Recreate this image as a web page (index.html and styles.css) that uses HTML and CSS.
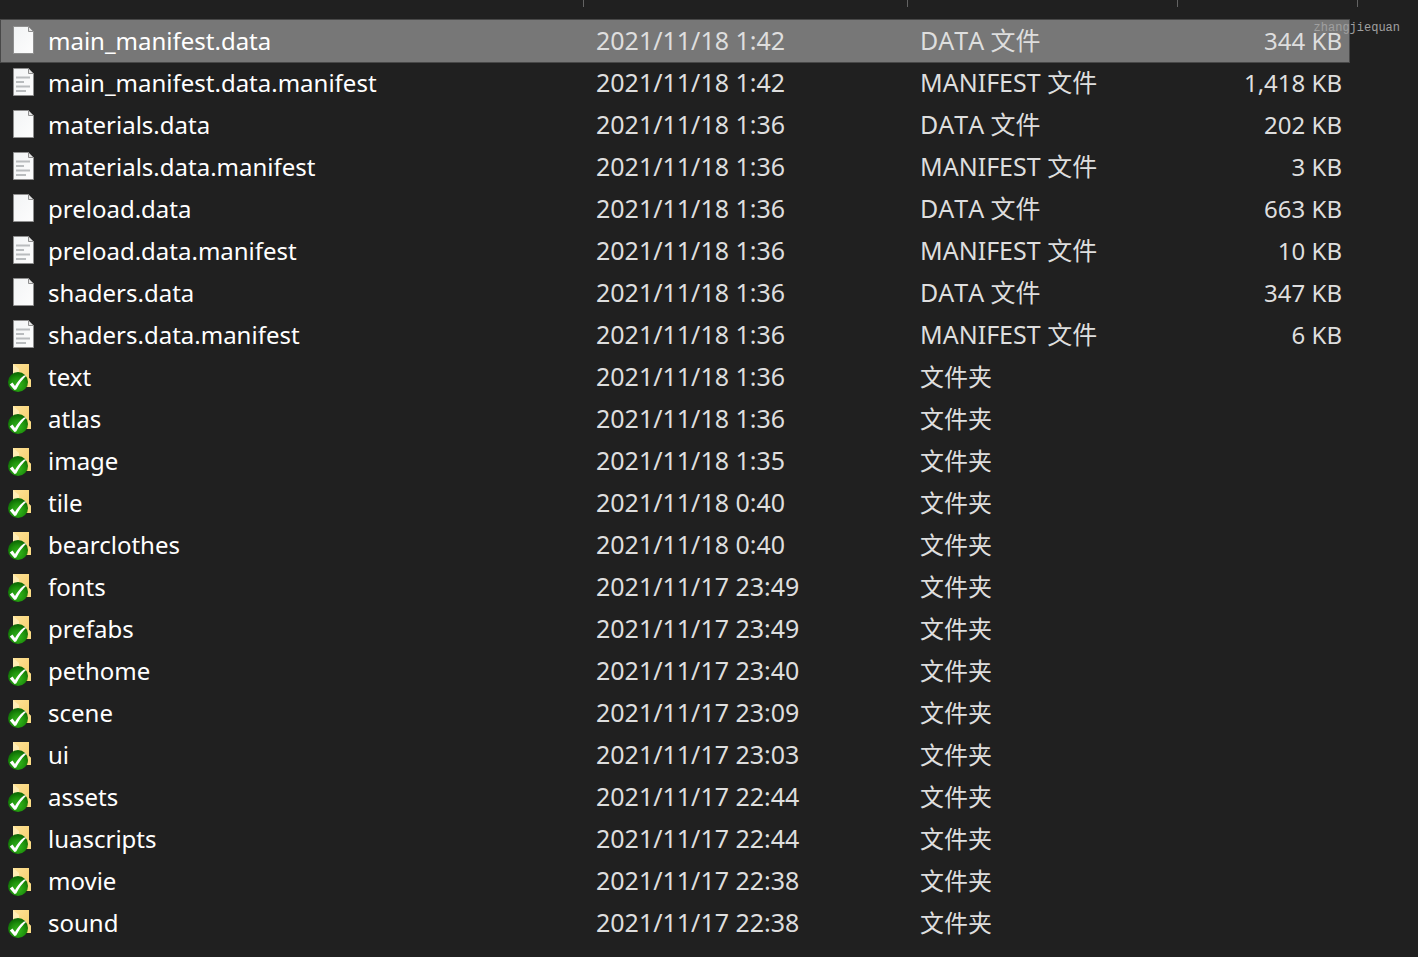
FILE: index.html
```
<!DOCTYPE html>
<html lang="zh-CN">
<head>
<meta charset="utf-8">
<title>文件</title>
<link rel="stylesheet" href="styles.css">
</head>
<body>
<svg class="defs" aria-hidden="true">
  <defs>
    <linearGradient id="paper" x1="0" y1="0" x2="1" y2="1"><stop offset="0" stop-color="#f2f4f5"/><stop offset="1" stop-color="#fdfdfd"/></linearGradient>
    <linearGradient id="fold" x1="0" y1="0" x2="1" y2="1"><stop offset="0" stop-color="#ffe399"/><stop offset="1" stop-color="#f5cc66"/></linearGradient>
    <radialGradient id="ball" cx=".5" cy=".65" r=".6"><stop offset="0" stop-color="#35b71c"/><stop offset=".6" stop-color="#1f930d"/><stop offset="1" stop-color="#0d6a05"/></radialGradient>
    <symbol id="blank" viewBox="0 0 32 32">
      <path d="M5.500 1.500h15l5 5v22h-20z" fill="url(#paper)" stroke="#8f8f8f"/>
      <path d="M20.500 1.500v5h5z" fill="#e4e4e4" stroke="#8f8f8f"/>
    </symbol>
    <symbol id="lines" viewBox="0 0 32 32">
      <use href="#blank"/>
      <path d="M8 10.500h14M8 15h8M8 19.500h14M8 24h10" stroke="#b9bcbe" stroke-width="1.800"/>
    </symbol>
    <symbol id="folder" viewBox="0 0 32 32">
      <path d="M5 3h16v14l2 2v7H5z" fill="url(#fold)"/>
      <path d="M5 3l6 5v18H5z" fill="#ffedb5"/>
      <path d="M20 17h1l2 2v7h-3z" fill="#fadc85"/>
      <circle cx="10" cy="21" r="10" fill="url(#ball)"/>
      <path d="M1.800 23.500L4.500 21.500l2.500 3.500Q11 18 16 14.400l2.500.2Q12.500 20 8.200 28.500l-1.700.5z" fill="#fff"/>
    </symbol>
  </defs>
</svg>
<main class="explorer">
  <div class="header-edge" aria-hidden="true"><span class="edge edge-name"></span><span class="edge edge-date"></span><span class="edge edge-type"></span><span class="edge edge-size"></span></div>
  <table class="files">
    <colgroup><col class="col-name"><col class="col-date"><col class="col-type"><col class="col-size"></colgroup>
    <tbody>
      <tr class="row selected"><td class="name"><div class="entry"><svg class="icon"><use href="#blank"/></svg>main_manifest.data</div></td><td class="info">2021/11/18 1:42</td><td class="info">DATA 文件</td><td class="size">344 KB</td></tr>
      <tr class="row"><td class="name"><div class="entry"><svg class="icon"><use href="#lines"/></svg>main_manifest.data.manifest</div></td><td class="info">2021/11/18 1:42</td><td class="info">MANIFEST 文件</td><td class="size">1,418 KB</td></tr>
      <tr class="row"><td class="name"><div class="entry"><svg class="icon"><use href="#blank"/></svg>materials.data</div></td><td class="info">2021/11/18 1:36</td><td class="info">DATA 文件</td><td class="size">202 KB</td></tr>
      <tr class="row"><td class="name"><div class="entry"><svg class="icon"><use href="#lines"/></svg>materials.data.manifest</div></td><td class="info">2021/11/18 1:36</td><td class="info">MANIFEST 文件</td><td class="size">3 KB</td></tr>
      <tr class="row"><td class="name"><div class="entry"><svg class="icon"><use href="#blank"/></svg>preload.data</div></td><td class="info">2021/11/18 1:36</td><td class="info">DATA 文件</td><td class="size">663 KB</td></tr>
      <tr class="row"><td class="name"><div class="entry"><svg class="icon"><use href="#lines"/></svg>preload.data.manifest</div></td><td class="info">2021/11/18 1:36</td><td class="info">MANIFEST 文件</td><td class="size">10 KB</td></tr>
      <tr class="row"><td class="name"><div class="entry"><svg class="icon"><use href="#blank"/></svg>shaders.data</div></td><td class="info">2021/11/18 1:36</td><td class="info">DATA 文件</td><td class="size">347 KB</td></tr>
      <tr class="row"><td class="name"><div class="entry"><svg class="icon"><use href="#lines"/></svg>shaders.data.manifest</div></td><td class="info">2021/11/18 1:36</td><td class="info">MANIFEST 文件</td><td class="size">6 KB</td></tr>
      <tr class="row"><td class="name"><div class="entry"><svg class="icon"><use href="#folder"/></svg>text</div></td><td class="info">2021/11/18 1:36</td><td>文件夹</td><td></td></tr>
      <tr class="row"><td class="name"><div class="entry"><svg class="icon"><use href="#folder"/></svg>atlas</div></td><td class="info">2021/11/18 1:36</td><td>文件夹</td><td></td></tr>
      <tr class="row"><td class="name"><div class="entry"><svg class="icon"><use href="#folder"/></svg>image</div></td><td class="info">2021/11/18 1:35</td><td>文件夹</td><td></td></tr>
      <tr class="row"><td class="name"><div class="entry"><svg class="icon"><use href="#folder"/></svg>tile</div></td><td class="info">2021/11/18 0:40</td><td>文件夹</td><td></td></tr>
      <tr class="row"><td class="name"><div class="entry"><svg class="icon"><use href="#folder"/></svg>bearclothes</div></td><td class="info">2021/11/18 0:40</td><td>文件夹</td><td></td></tr>
      <tr class="row"><td class="name"><div class="entry"><svg class="icon"><use href="#folder"/></svg>fonts</div></td><td class="info">2021/11/17 23:49</td><td>文件夹</td><td></td></tr>
      <tr class="row"><td class="name"><div class="entry"><svg class="icon"><use href="#folder"/></svg>prefabs</div></td><td class="info">2021/11/17 23:49</td><td>文件夹</td><td></td></tr>
      <tr class="row"><td class="name"><div class="entry"><svg class="icon"><use href="#folder"/></svg>pethome</div></td><td class="info">2021/11/17 23:40</td><td>文件夹</td><td></td></tr>
      <tr class="row"><td class="name"><div class="entry"><svg class="icon"><use href="#folder"/></svg>scene</div></td><td class="info">2021/11/17 23:09</td><td>文件夹</td><td></td></tr>
      <tr class="row"><td class="name"><div class="entry"><svg class="icon"><use href="#folder"/></svg>ui</div></td><td class="info">2021/11/17 23:03</td><td>文件夹</td><td></td></tr>
      <tr class="row"><td class="name"><div class="entry"><svg class="icon"><use href="#folder"/></svg>assets</div></td><td class="info">2021/11/17 22:44</td><td>文件夹</td><td></td></tr>
      <tr class="row"><td class="name"><div class="entry"><svg class="icon"><use href="#folder"/></svg>luascripts</div></td><td class="info">2021/11/17 22:44</td><td>文件夹</td><td></td></tr>
      <tr class="row"><td class="name"><div class="entry"><svg class="icon"><use href="#folder"/></svg>movie</div></td><td class="info">2021/11/17 22:38</td><td>文件夹</td><td></td></tr>
      <tr class="row"><td class="name"><div class="entry"><svg class="icon"><use href="#folder"/></svg>sound</div></td><td class="info">2021/11/17 22:38</td><td>文件夹</td><td></td></tr>
    </tbody>
  </table>
  <span class="watermark">zhangjiequan</span>
</main>
</body>
</html>
```
FILE: styles.css
```
* { box-sizing: border-box; }
body {
  margin: 0;
  background: #202020;
  color: #dedede;
  font-family: "Noto Sans", "Noto Sans CJK SC", sans-serif;
  font-size: 24px;
  line-height: 32px;
}
.defs { position: absolute; width: 0; height: 0; }
.explorer { position: relative; min-height: 100vh; }
.header-edge { display: flex; height: 20px; }
.edge { height: 7px; border-right: 1px solid #636363; }
.edge-name { width: 584px; }
.edge-date { width: 324px; }
.edge-type { width: 270px; }
.edge-size { width: 180px; }
.files { width: calc(100% - 70px); margin-left: 1px; table-layout: fixed; border-collapse: collapse; }
.col-date { width: 324px; }
.col-type { width: 270px; }
.col-size { width: 171px; }
.row { height: 42px; }
.row td { padding: 0 0 0 12px; vertical-align: middle; white-space: nowrap; }
.row .name { padding-left: 7px; color: #fff; }
.row .info { padding-bottom: 2px; font-size: 25px; font-kerning: none; }
.row .size { padding: 0 7px 0 0; text-align: right; }
.selected { background: #777; outline: 1px solid #484848; }
.entry { display: flex; align-items: center; gap: 8px; }
.icon { flex: none; width: 32px; height: 32px; }
.watermark {
  position: absolute;
  top: 21px;
  right: 18px;
  color: #a0a0a0;
  font-family: "Liberation Mono", monospace;
  font-size: 12px;
  line-height: 14px;
}
```
